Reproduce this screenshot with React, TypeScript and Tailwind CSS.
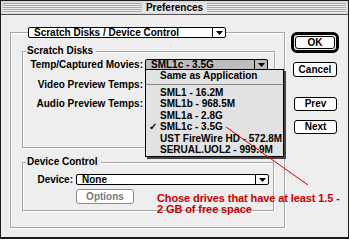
function Tri() {
  return (
    <svg width="7" height="4" viewBox="0 0 7 4" className="block">
      <path d="M0 0h7L3.5 4z" fill="#000" />
    </svg>
  );
}

function Popup({ label, active, className = '' }: { label: string; active?: boolean; className?: string }) {
  return (
    <div
      className={`flex h-[11px] items-stretch rounded-[2px] border border-black ${
        active ? 'bg-[#bdbdbd]' : 'bg-white'
      } ${className}`}
    >
      <span className="flex flex-1 items-center pl-[5px] text-[10px] leading-none font-bold whitespace-nowrap">
        {label}
      </span>
      <span className="flex w-[13px] items-center justify-center border-l border-black">
        <Tri />
      </span>
    </div>
  );
}

function Button({ label, className = '', muted }: { label: string; className?: string; muted?: boolean }) {
  return (
    <div
      className={`flex items-center justify-center rounded-[3px] border bg-white text-[10px] leading-none font-bold ${
        muted ? 'border-[#8a8a8a] text-[#7a7a7a]' : 'border-black text-black'
      } ${className}`}
    >
      {label}
    </div>
  );
}

function GroupLabel({ text }: { text: string }) {
  return (
    <div className="-mt-[7px] ml-[3px] flex h-[12px]">
      <span className="bg-[#eeeeee] pr-[3px] pl-[1px] text-[10px] leading-[12px] font-bold">{text}</span>
    </div>
  );
}

const menuItems = ['SML1 - 16.2M', 'SML1b - 968.5M', 'SML1a - 2.8G', 'SML1c - 3.5G', 'UST FireWire HD - 572.8M', 'SERUAL.UOL2 - 999.9M'];

export default function App() {
  return (
    <div className="relative h-[240px] w-[350px] overflow-hidden bg-white text-black [font-family:'Liberation_Sans',Arial,sans-serif]">
      <div className="flex h-[239px] w-[349px] flex-col border border-b-2 border-[#1a1a1a] bg-[#eeeeee]">
        {/* title bar */}
        <div className="flex h-[14px] items-center border-b border-[#555] bg-[#dcdcdc] px-[2px]">
          <div className="h-[10px] flex-1 bg-[image:repeating-linear-gradient(to_bottom,#a9a9a9_0px,#a9a9a9_1px,#ececec_1px,#ececec_2px)]" />
          <span className="bg-[#e4e4e4] px-[4px] text-[10px] leading-none font-bold">Preferences</span>
          <div className="h-[10px] flex-1 bg-[image:repeating-linear-gradient(to_bottom,#a9a9a9_0px,#a9a9a9_1px,#ececec_1px,#ececec_2px)]" />
        </div>

        <div className="flex">
          {/* main group box */}
          <div className="mt-[17px] ml-[9px] flex h-[196px] w-[275px] flex-col border border-[#a6a6a6] shadow-[1px_1px_0_#fff,inset_1px_1px_0_#fff]">
            <Popup label="Scratch Disks / Device Control" className="-mt-[6px] ml-[17px] w-[198px]" />

            <div className="mt-[13px] ml-[11px] flex h-[97px] w-[253px] flex-col border border-[#a6a6a6] shadow-[1px_1px_0_#fff,inset_1px_1px_0_#fff]">
              <GroupLabel text="Scratch Disks" />
              <div className="mt-[2px] flex h-[12px] items-center">
                <span className="w-[121px] pr-[1px] text-right text-[10px] leading-none font-bold">Temp/Captured Movies:</span>
                <Popup label="SML1c - 3.5G" active className="ml-[1px] h-[12px] w-[123px]" />
              </div>
              {/* these two popups sit under the open menu */}
              <div className="mt-[8px] flex h-[12px] items-center">
                <span className="w-[121px] pr-[1px] text-right text-[10px] leading-none font-bold">Video Preview Temps:</span>
                <Popup label="" className="ml-[1px] h-[12px] w-[123px]" />
              </div>
              <div className="mt-[7px] flex h-[12px] items-center">
                <span className="w-[121px] pr-[1px] text-right text-[10px] leading-none font-bold">Audio Preview Temps:</span>
                <Popup label="" className="ml-[1px] h-[12px] w-[123px]" />
              </div>
            </div>

            <div className="mt-[14px] ml-[11px] flex h-[49px] w-[252px] flex-col border border-[#a6a6a6] shadow-[1px_1px_0_#fff,inset_1px_1px_0_#fff]">
              <GroupLabel text="Device Control" />
              <div className="mt-[6px] flex items-center">
                <span className="w-[50px] text-right text-[10px] leading-none font-bold">Device:</span>
                <Popup label="None" className="ml-[3px] w-[193px]" />
              </div>
              <Button label="Options" muted className="mt-[4px] ml-[53px] h-[15px] w-[58px]" />
            </div>
          </div>

          {/* buttons */}
          <div className="mt-[17px] ml-[6px] flex flex-col">
            <div className="flex h-[21px] w-[48px] rounded-[6px] border-[3px] border-black bg-[#eeeeee] p-[1px]">
              <Button label="OK" className="flex-1" />
            </div>
            <Button label="Cancel" className="mt-[9px] ml-[2px] h-[15px] w-[44px]" />
            <Button label="Prev" className="mt-[20px] ml-[3px] h-[14px] w-[43px]" />
            <Button label="Next" className="mt-[9px] ml-[3px] h-[14px] w-[43px]" />
          </div>
        </div>
      </div>

      {/* open popup menu */}
      <div className="absolute top-[69px] left-[145px] flex h-[88px] w-[139px] flex-col border border-black bg-[#e2e2e2] shadow-[2px_2px_0_#444]">
        <div className="flex h-[11px] items-center pl-[14px] text-[10px] leading-none font-bold">Same as Application</div>
        <div className="flex h-[6px] items-center">
          <div className="h-px w-full bg-[#8a8a8a]" />
        </div>
        {menuItems.map((item) => (
          <div key={item} className="relative flex h-[11.5px] items-center pl-[14px] text-[10px] leading-none font-bold whitespace-nowrap">
            {item === 'SML1c - 3.5G' && <span className="absolute left-[3px] text-[10px]">✓</span>}
            {item}
          </div>
        ))}
      </div>

      {/* annotation */}
      <svg className="pointer-events-none absolute top-0 left-0" width="350" height="240">
        <line x1="226" y1="127" x2="308" y2="185" stroke="#d40000" strokeWidth="1" />
      </svg>
      <div className="absolute top-[193px] left-[157px] text-[11px] leading-[11px] font-bold tracking-[-0.1px] text-[#c80000]">
        Chose drives that have at least 1.5 -
        <br />2 GB of free space
      </div>
    </div>
  );
}
